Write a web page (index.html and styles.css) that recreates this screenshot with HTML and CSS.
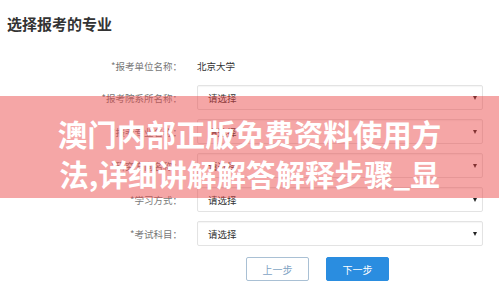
FILE: index.html
```html
<!DOCTYPE html>
<html lang="zh-CN">
<head>
    <meta charset="UTF-8">
    <meta name="viewport" content="width=device-width, initial-scale=1.0">
    <title>选择报考的专业</title>
    <link rel="stylesheet" href="styles.css">
</head>
<body>
<div class="page">
    <h2 class="title">选择报考的专业</h2>
    <div class="form">
        <div class="row row-text">
            <label class="label">*报考单位名称：</label>
            <span class="value">北京大学</span>
        </div>
        <div class="row">
            <label class="label">*报考院系所名称：</label>
            <div class="select"><span>请选择</span><i class="arrow"></i></div>
        </div>
        <div class="row">
            <label class="label">*报考专业名称：</label>
            <div class="select"><span>请选择</span><i class="arrow"></i></div>
        </div>
        <div class="row">
            <label class="label">*研究方向名称：</label>
            <div class="select"><span>请选择</span><i class="arrow"></i></div>
        </div>
        <div class="row">
            <label class="label">*学习方式：</label>
            <div class="select"><span>请选择</span><i class="arrow"></i></div>
        </div>
        <div class="row">
            <label class="label">*考试科目：</label>
            <div class="select"><span>请选择</span><i class="arrow"></i></div>
        </div>
    </div>
    <div class="actions">
        <button class="btn btn-prev">上一步</button>
        <button class="btn btn-next">下一步</button>
    </div>
</div>
<div class="banner">
    <p>澳门内部正版免费资料使用方法,详细讲解解答解释步骤_显</p>
</div>
</body>
</html>
```

FILE: styles.css
```css
body {
    font-family: "Noto Sans CJK SC", "Noto Sans", sans-serif;
    background-color: #fff;
    margin: 0;
    padding: 0;
    width: 499px;
    height: 296px;
    overflow: hidden;
    position: relative;
}

.page {
    padding: 13px 7px 0;
}

.title {
    margin: 0;
    font-size: 15px;
    line-height: 22px;
    font-weight: bold;
    color: #333;
}

.form {
    display: flex;
    flex-direction: column;
    gap: 9px;
    margin-top: 21px;
}

.row {
    display: flex;
    align-items: center;
    height: 25px;
    font-size: 9.5px;
}

.row-text {
    height: 20px;
}

.label {
    flex: none;
    width: 175px;
    margin-right: 15px;
    text-align: right;
    color: #777;
}

.value {
    color: #333;
}

.select {
    display: flex;
    align-items: center;
    justify-content: space-between;
    width: 286px;
    height: 25px;
    padding: 0 5px 0 10px;
    box-sizing: border-box;
    border: 1px solid #e3e3e3;
    border-radius: 2px;
    box-shadow: inset 0 1px 1px rgba(0, 0, 0, 0.04);
    color: #333;
}

.arrow {
    width: 0;
    height: 0;
    border-left: 2.5px solid transparent;
    border-right: 2.5px solid transparent;
    border-top: 4px solid #222;
}

.actions {
    display: flex;
    gap: 17px;
    margin: 11px 0 0 239px;
}

.btn {
    width: 63px;
    height: 24px;
    padding: 0;
    border-radius: 2px;
    font-family: inherit;
    font-size: 10px;
    cursor: pointer;
}

.btn-prev {
    background: #fff;
    border: 1px solid #a9c0d4;
    color: #7fa3c4;
}

.btn-next {
    background: #2a8de0;
    border: 1px solid #2a8de0;
    color: #fff;
}

/* pink title band over the form */
.banner {
    position: absolute;
    top: 96px;
    left: 0;
    right: 0;
    height: 102px;
    background: rgba(235, 70, 70, 0.48);
    overflow: hidden;
}

.banner p {
    width: 396px;
    margin: 17px auto 0;
    font-size: 29.5px;
    line-height: 40px;
    font-weight: bold;
    color: #fff;
    text-align: center;
}
```
